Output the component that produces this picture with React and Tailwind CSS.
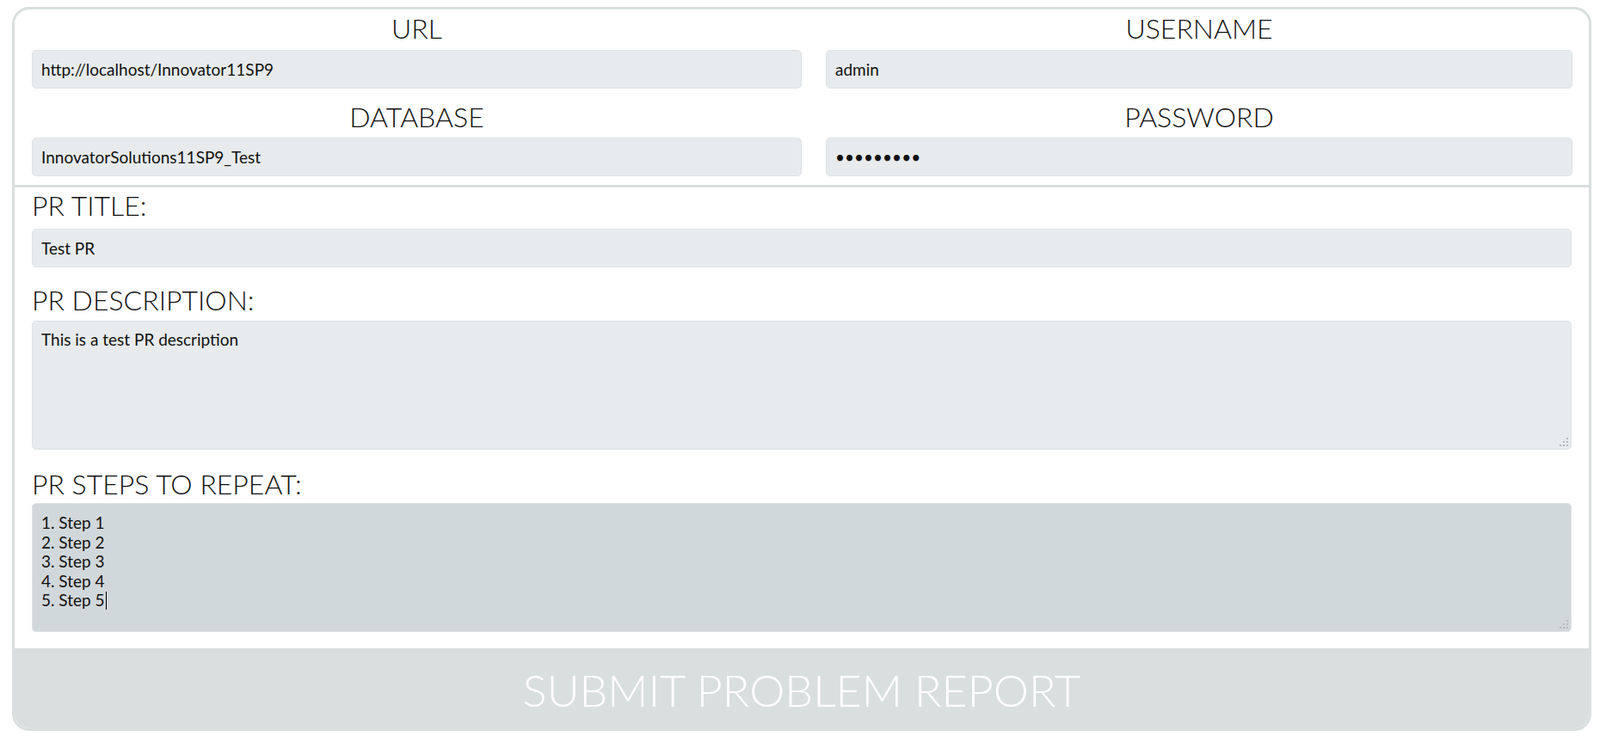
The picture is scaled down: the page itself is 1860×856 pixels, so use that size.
import React from "react";

const font = { fontFamily: "Lato, 'Open Sans', sans-serif" };

function Grip() {
  return (
    <svg className="absolute right-[3px] bottom-[3px]" width="10" height="10" viewBox="0 0 10 10">
      <rect x="8" y="0" width="2" height="2" fill="#b3b9bc" />
      <rect x="4" y="4" width="2" height="2" fill="#b3b9bc" />
      <rect x="8" y="4" width="2" height="2" fill="#b3b9bc" />
      <rect x="0" y="8" width="2" height="2" fill="#b3b9bc" />
      <rect x="4" y="8" width="2" height="2" fill="#b3b9bc" />
      <rect x="8" y="8" width="2" height="2" fill="#b3b9bc" />
    </svg>
  );
}

function Field({ value, type = "text" }) {
  return (
    <input
      type={type}
      defaultValue={value}
      readOnly
      className="block w-full h-[45px] rounded-[5px] border border-[#dde2e4] bg-[#e7ebed] px-[10px] text-[19px] text-[#111] outline-none"
    />
  );
}

function Area({ children, dark }) {
  return (
    <div
      className={
        "relative h-[150px] rounded-[5px] border border-[#dde2e4] px-[10px] text-[19px] leading-[22.5px] text-[#111] " +
        (dark ? "bg-[#d1d8db] pt-[11px]" : "bg-[#e7ebed] pt-[10px]")
      }
    >
      {children}
      <Grip />
    </div>
  );
}

function Label({ children, center, className = "" }) {
  return (
    <div
      className={
        "text-[32px] leading-[38px] font-light text-[#111] " +
        (center ? "text-center " : "") +
        className
      }
    >
      {children}
    </div>
  );
}

export default function App() {
  const steps = ["1. Step 1", "2. Step 2", "3. Step 3", "4. Step 4"];
  return (
    <div className="bg-white pt-[8px] pl-[14px] pr-[10px]" style={font}>
      <div className="flex h-[842px] flex-col overflow-hidden rounded-[20px] border-[3px] border-[#d9dfdf]">
        <div className="grid grid-cols-[895px_868px] gap-x-[28px] border-b-[3px] border-[#d9dfdf] px-5 pt-[3px] pb-[10px]">
          <div>
            <Label center className="mb-[6px]">URL</Label>
            <Field value="http://localhost/Innovator11SP9" />
            <Label center className="mt-[14px] mb-[5px]">DATABASE</Label>
            <Field value="InnovatorSolutions11SP9_Test" />
          </div>
          <div>
            <Label center className="mb-[6px]">USERNAME</Label>
            <Field value="admin" />
            <Label center className="mt-[14px] mb-[5px]">PASSWORD</Label>
            <Field value="abcdefghi" type="password" />
          </div>
        </div>

        <div className="flex-1 px-5 pt-[2px]">
          <Label className="mb-[8px]">PR TITLE:</Label>
          <Field value="Test PR" />
          <Label className="mt-[19px] mb-[5px]">PR DESCRIPTION:</Label>
          <Area>This is a test PR description</Area>
          <Label className="mt-[21px] mb-[3px]">PR STEPS TO REPEAT:</Label>
          <Area dark>
            {steps.map((s) => (
              <div key={s}>{s}</div>
            ))}
            <div className="flex items-center">
              5. Step 5
              <span className="ml-[1px] inline-block h-[21px] w-px bg-black" />
            </div>
          </Area>
        </div>

        <button className="flex h-[93px] w-full items-center justify-center bg-[#d9dfdf] pt-[2px] text-[52px] font-light text-white">
          SUBMIT PROBLEM REPORT
        </button>
      </div>
    </div>
  );
}
